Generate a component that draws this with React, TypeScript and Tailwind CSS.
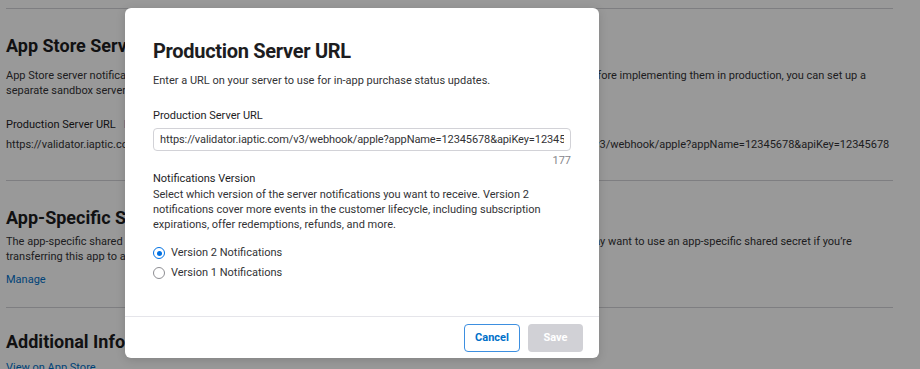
import React from "react";

const URL = "https://validator.iaptic.com/v3/webhook/apple?appName=12345678&apiKey=12345678";

function Divider() {
  return <div className="h-px w-full bg-[#d2d2d7]" />;
}

export default function App() {
  return (
    <div
      className="relative w-[920px] h-[369px] overflow-hidden bg-white text-[#333336]"
      style={{ fontFamily: "Roboto, 'Liberation Sans', Arial, sans-serif" }}
    >
      {/* background page */}
      <div className="w-[893px] pl-[6px] pt-[8px]">
        <Divider />
        <h2 className="mt-[25px] text-[18px] leading-[24px] font-bold text-[#1d1d1f]">
          App Store Server Notifications
        </h2>
        <p className="mt-[10px] whitespace-nowrap text-[11px] leading-[15px]">
          App Store server notifications send real-time updates about in-app purchase events to your server. To test notifications  before implementing them in production, you can set up a
          <br />
          separate sandbox server URL.
        </p>
        <div className="mt-[19px] grid grid-cols-[452px_1fr] text-[11px] leading-[15px]">
          <div>
            <div className="flex gap-[8px]">
              <span className="text-[#1d1d1f]">Production Server URL</span>
              <span className="text-[#0070c9]">Edit</span>
            </div>
            <div className="mt-[5px] whitespace-nowrap">{URL}</div>
          </div>
          <div>
            <div className="flex gap-[8px]">
              <span className="text-[#1d1d1f]">Sandbox Server URL</span>
            </div>
            <div className="mt-[5px] whitespace-nowrap">{URL}</div>
          </div>
        </div>
        <div className="mt-[28px]">
          <Divider />
        </div>
        <h2 className="mt-[25px] text-[18px] leading-[24px] font-bold text-[#1d1d1f]">
          App-Specific Shared Secret
        </h2>
        <p className="mt-[4px] whitespace-nowrap text-[11px] leading-[15px]">
          The app-specific shared secret is a unique key to receive receipts for only this app’s auto-renewable subscriptions. You may want to use an app-specific shared secret if you’re
          <br />
          transferring this app to another developer, or if you want to keep your primary shared secret private.
        </p>
        <div className="mt-[8px] text-[11px] leading-[15px] text-[#0070c9]">Manage</div>
        <div className="mt-[20px]">
          <Divider />
        </div>
        <h2 className="mt-[22px] text-[18px] leading-[24px] font-bold text-[#1d1d1f]">
          Additional Information
        </h2>
        <div className="mt-[6px] text-[11px] leading-[15px] text-[#0070c9]">View on App Store</div>
      </div>

      {/* overlay */}
      <div className="absolute inset-0 bg-black/40" />

      {/* modal */}
      <div className="absolute left-[125px] top-[8px] flex h-[350px] w-[474px] flex-col rounded-[6px] bg-white shadow-[0_2px_10px_rgba(0,0,0,0.15)]">
        <div className="flex-1 px-[28px] pt-[31px]">
          <h1 className="text-[20px] leading-[24px] font-bold tracking-[-0.3px] text-[#1d1d1f]">
            Production Server URL
          </h1>
          <p className="mt-[10px] text-[11px] leading-[15px] text-[#333336]">
            Enter a URL on your server to use for in-app purchase status updates.
          </p>
          <div className="mt-[20px] text-[11px] leading-[15px] text-[#1d1d1f]">Production Server URL</div>
          <input
            readOnly
            value={URL}
            className="mt-[5px] block h-[23px] w-full rounded-[4px] border border-[#d2d2d7] bg-white px-[6px] text-[11px] tracking-[-0.1px] text-[#333336] outline-none"
          />
          <div className="mt-[2px] text-right text-[11px] leading-[15px] text-[#86868b]">177</div>
          <div className="mt-[3px] text-[11px] leading-[15px] text-[#1d1d1f]">Notifications Version</div>
          <p className="mt-[1px] text-[11px] leading-[15px] text-[#333336]">
            Select which version of the server notifications you want to receive. Version 2
            <br />
            notifications cover more events in the customer lifecycle, including subscription
            <br />
            expirations, offer redemptions, refunds, and more.
          </p>
          <div className="mt-[11px] flex flex-col">
            <label className="flex h-[20px] items-center gap-[6px]">
              <span className="flex h-[12px] w-[12px] items-center justify-center rounded-full border-[1.5px] border-[#0071e3]">
                <span className="h-[5px] w-[5px] rounded-full bg-[#0071e3]" />
              </span>
              <span className="text-[11px] text-[#333336]">Version 2 Notifications</span>
            </label>
            <label className="flex h-[20px] items-center gap-[6px]">
              <span className="h-[12px] w-[12px] rounded-full border-[1.5px] border-[#8e8e93]" />
              <span className="text-[11px] text-[#333336]">Version 1 Notifications</span>
            </label>
          </div>
        </div>
        <div className="flex justify-end gap-[8px] border-t border-[#e5e5ea] pb-[6px] pl-[28px] pr-[16px] pt-[7px]">
          <button className="h-[28px] w-[56px] rounded-[4px] border border-[#3d8fe0] bg-white text-[11px] font-bold text-[#0070c9]">
            Cancel
          </button>
          <button className="h-[28px] w-[55px] rounded-[4px] bg-[#d1d1d6] text-[11px] font-bold text-white">
            Save
          </button>
        </div>
      </div>
    </div>
  );
}
